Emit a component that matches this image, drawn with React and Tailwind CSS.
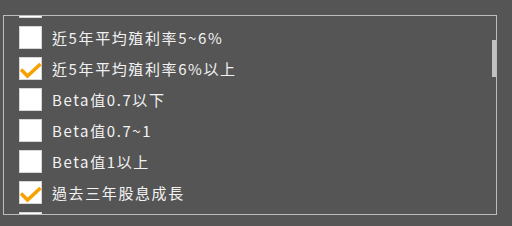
import React from 'react';

const items = [
  { label: '近5年平均殖利率4~5%', checked: false },
  { label: '近5年平均殖利率5~6%', checked: false },
  { label: '近5年平均殖利率6%以上', checked: true },
  { label: 'Beta值0.7以下', checked: false },
  { label: 'Beta值0.7~1', checked: false },
  { label: 'Beta值1以上', checked: false },
  { label: '過去三年股息成長', checked: true },
  { label: '過去五年股息成長', checked: false },
];

function Check() {
  return (
    <svg className="absolute left-0 top-0" width="23" height="23" viewBox="0 0 23 23">
      <path d="M1 11.5 L7.5 18 L20.5 6" fill="none" stroke="#f5a200" strokeWidth="3.6" strokeLinecap="butt" strokeLinejoin="miter" />
    </svg>
  );
}

export default function App() {
  return (
    <div className="w-[512px] h-[226px] bg-[#555555] pt-[15px] pl-[3px]">
      {/* Filter list box */}
      <div className="relative w-[494px] h-[200px] border border-[#bdbdbd] overflow-hidden">
        <ul className="mt-[-25px] pl-[15px]">
          {items.map((item, i) => (
            <li key={i} className="flex items-center h-[31px]">
              <span className="relative w-[23px] h-[23px] bg-white border border-[#d6d6d6] shrink-0">
                {item.checked && <Check />}
              </span>
              <span
                className="ml-[10px] text-[15px] tracking-[1.6px] text-[#f2f2f2] leading-none"
                style={{ fontFamily: '"Noto Sans CJK TC", "Noto Sans", sans-serif' }}
              >
                {item.label}
              </span>
            </li>
          ))}
        </ul>
        {/* Scrollbar thumb */}
        <div className="absolute right-0 top-[24px] w-[4px] h-[37px] bg-[#c2c2c2]" />
      </div>
    </div>
  );
}
